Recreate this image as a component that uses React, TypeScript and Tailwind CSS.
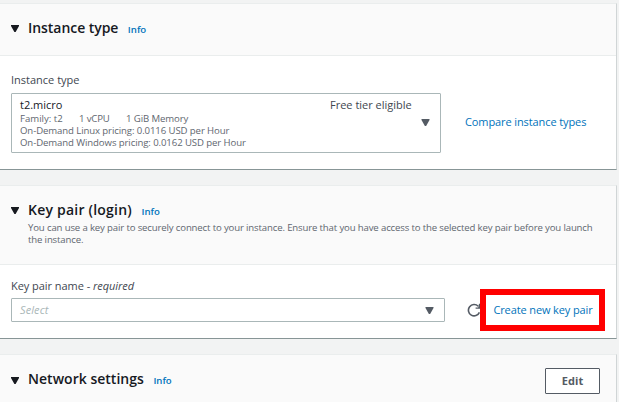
import type { ReactNode } from "react";

function Caret({ className }: { className: string }) {
  return (
    <svg viewBox="0 0 8 7" className={`shrink-0 ${className}`} aria-hidden="true">
      <path d="M0 0H8V1L4.6 7H3.4L0 1Z" fill="currentColor" />
    </svg>
  );
}

function Heading({ title, spacing, caret }: { title: string; spacing: string; caret: string }) {
  return (
    <div className="flex h-5 items-start">
      <Caret className={`h-[7px] w-2 text-[#16191f] ${caret}`} />
      <h2 className={`ml-[9px] text-[14px] leading-5 font-semibold text-[#16191f] ${spacing}`}>{title}</h2>
      <a className="mt-1 ml-[9.5px] text-[9.6px] leading-4 font-semibold text-[#0073bb]">Info</a>
    </div>
  );
}

function Card({ className, children }: { className: string; children: ReactNode }) {
  return (
    <section className={`w-[617px] border-t border-r border-t-[#eaeded] border-r-[#d0d5d6] bg-white ${className}`}>
      {children}
    </section>
  );
}

export default function App() {
  return (
    <main className="h-[402px] w-[619px] overflow-hidden bg-[#f2f3f3] pt-[3px] font-['Open_Sans','Noto_Sans',sans-serif] text-[11px] whitespace-nowrap text-[#414750]">
      <Card className="h-[167px] border-b border-b-[#879596]">
        <header className="h-[52px] border-b border-[#eaeded] bg-[#fafafa] pt-[14px] pl-[11px]">
          <Heading title="Instance type" spacing="tracking-[-0.05px]" caret="mt-[7px]" />
        </header>
        <div className="pt-[16px] pl-[11px]">
          <div className="h-[21px] leading-4">Instance type</div>
          <div className="flex items-center">
            <div className="flex h-[60px] w-[430px] rounded-[1px] border border-[#aab7b8] pl-2">
              <div className="w-[310px] pt-[3px] text-[9.6px] leading-3 tracking-[-0.1px] text-[#5f6770]">
                <div className="h-4 text-[11px] leading-4 tracking-normal text-[#16191f]">t2.micro</div>
                <div className="flex">
                  <span className="w-[59px] tracking-normal">Family: t2</span>
                  <span className="w-[47px] tracking-[-0.15px]">1 vCPU</span>
                  <span>1 GiB Memory</span>
                </div>
                <div>On-Demand Linux pricing: 0.0116 USD per Hour</div>
                <div>On-Demand Windows pricing: 0.0162 USD per Hour</div>
              </div>
              <div className="w-[91px] pt-[3px] leading-4">Free tier eligible</div>
              <Caret className="mt-[25px] h-[7px] w-[9px] text-[#545b64]" />
            </div>
            <a className="mt-[-2px] ml-6 tracking-[-0.1px] text-[#0073bb]">Compare instance types</a>
          </div>
        </div>
      </Card>

      <Card className="mt-[15px] h-[154px] border-b border-b-[#879596]">
        <header className="h-[79px] border-b border-[#eaeded] bg-[#fafafa] pt-[14px] pl-[11px]">
          <Heading title="Key pair (login)" spacing="tracking-[0.22px]" caret="mt-[7px]" />
          <p className="mt-[2px] ml-[17px] text-[9.6px] leading-3 tracking-[-0.145px] text-[#5f6770]">
            You can use a key pair to securely connect to your instance. Ensure that you have access to the selected key pair before you launch
            <br />
            the instance.
          </p>
        </header>
        <div className="pt-[13px] pl-[11px]">
          <div className="h-5 leading-4 tracking-[-0.05px]">
            Key pair name - <i>required</i>
          </div>
          <div className="flex h-6 items-center">
            <div className="flex h-6 w-[434px] shrink-0 items-center justify-between rounded-[1px] border border-[#aab7b8] pr-[10px] pl-2">
              <i className="tracking-[0.1px] text-[#aab7b8]">Select</i>
              <Caret className="h-[7px] w-[9px] text-[#545b64]" />
            </div>
            <svg viewBox="0 0 14 14" className="ml-[22px] h-[14px] w-[14px] shrink-0 text-[#545b64]" fill="none" stroke="currentColor" strokeWidth="1.6" aria-hidden="true">
              <path d="M12.4 9.4A5.7 5.7 0 1 1 11.2 3.2" />
              <path d="M13.2 0.8V5.8H8.6V4.6H11.2L12 0.8Z" fill="currentColor" stroke="none" />
            </svg>
            <div className="relative z-10 -ml-px flex h-[42px] w-[125px] shrink-0 items-center justify-center border-6 border-[#ff0000] pl-px">
              <a className="tracking-[-0.12px] text-[#0073bb]">Create new key pair</a>
            </div>
          </div>
        </div>
      </Card>

      <Card className="mt-[15px] h-[80px]">
        <header className="flex h-[80px] justify-between bg-[#fafafa] pt-[13px] pr-4 pl-[11px]">
          <div className="pt-px">
            <Heading title="Network settings" spacing="tracking-[0.02px]" caret="mt-[8px]" />
          </div>
          <button className="h-[26px] w-[55px] rounded-[1px] border border-[#545b64] bg-white pb-px text-[11px] leading-4 font-bold tracking-[0.1px] text-[#545b64]">Edit</button>
        </header>
      </Card>
    </main>
  );
}
